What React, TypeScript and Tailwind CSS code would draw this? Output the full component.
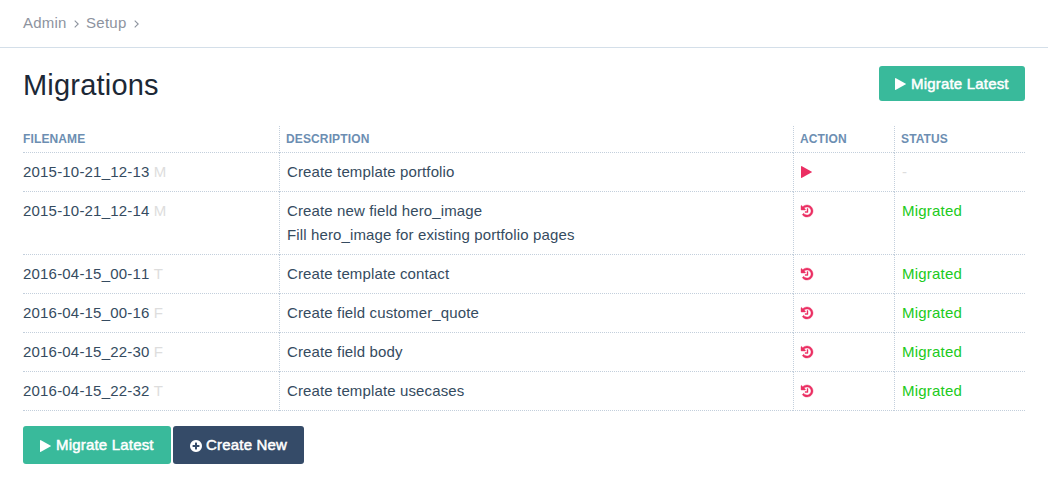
import type { ReactNode } from "react";

function PlayIcon({ className = "" }: { className?: string }) {
  return (
    <svg viewBox="0 0 11 12" className={`h-3 w-[11px] shrink-0 ${className}`} fill="currentColor">
      <path d="M0 .4Q0-.1.5.1L10.8 5.7Q11.2 6 10.8 6.3L.5 11.9Q0 12.1 0 11.6z" />
    </svg>
  );
}

function HistoryIcon() {
  return (
    <svg viewBox="0 128 1536 1536" className="size-3 overflow-visible" fill="currentColor" stroke="currentColor" strokeWidth="50">
      <path d="M1536 896q0 156-61 298t-164 245-245 164-298 61q-172 0-327-72.5t-264-204.5q-7-10-6.5-22.5t8.5-20.5l137-138q10-9 25-9 16 2 23 12 73 95 179 147t225 52q104 0 198.5-40.5t163.5-109.5 109.5-163.5 40.5-198.5-40.5-198.5-109.5-163.5-163.5-109.5-198.5-40.5q-98 0-188 35.5t-160 101.5l137 138q31 30 14 69-17 40-59 40h-448q-26 0-45-19t-19-45v-448q0-42 40-59 39-17 69 14l130 129q107-101 244.5-156.5t284.5-55.5q156 0 298 61t245 164 164 245 61 298zm-640-288v448q0 14-9 23t-23 9h-320q-14 0-23-9t-9-23v-64q0-14 9-23t23-9h224v-352q0-14 9-23t23-9h64q14 0 23 9t9 23z" />
    </svg>
  );
}

function PlusCircleIcon() {
  return (
    <svg viewBox="0 0 1536 1536" className="mt-0.5 size-3 shrink-0" fill="currentColor">
      <path d="M1216 832v-128q0-26-19-45t-45-19h-256v-256q0-26-19-45t-45-19h-128q-26 0-45 19t-19 45v256h-256q-26 0-45 19t-19 45v128q0 26 19 45t45 19h256v256q0 26 19 45t45 19h128q26 0 45-19t19-45v-256h256q26 0 45-19t19-45zm320-64q0 209-103 385.5t-279.5 279.5-385.5 103-385.5-103-279.5-279.5-103-385.5 103-385.5 279.5-279.5 385.5-103 385.5 103 279.5 279.5 103 385.5z" />
    </svg>
  );
}

function Chevron({ className = "" }: { className?: string }) {
  return (
    <svg viewBox="0 0 5 8" className={`mt-px h-2 w-[5px] ${className}`} fill="none" stroke="currentColor" strokeWidth="1.1">
      <path d="M.7.6 4.2 4 .7 7.4" />
    </svg>
  );
}

function Button({ className, children }: { className: string; children: ReactNode }) {
  return (
    <button className={`flex items-center rounded-[3px] text-[15px] leading-6 whitespace-nowrap text-white ${className}`}>
      {children}
    </button>
  );
}

const label = "tracking-[0.19px] [-webkit-text-stroke:0.5px_white]";

const rows = [
  { file: "2015-10-21_12-13", type: "M", description: ["Create template portfolio"], migrated: false },
  { file: "2015-10-21_12-14", type: "M", description: ["Create new field hero_image", "Fill hero_image for existing portfolio pages"], migrated: true },
  { file: "2016-04-15_00-11", type: "T", description: ["Create template contact"], migrated: true },
  { file: "2016-04-15_00-16", type: "F", description: ["Create field customer_quote"], migrated: true },
  { file: "2016-04-15_22-30", type: "F", description: ["Create field body"], migrated: true },
  { file: "2016-04-15_22-32", type: "T", description: ["Create template usecases"], migrated: true },
];

export default function App() {
  return (
    <div className="min-h-[502px] bg-white font-['Liberation_Sans',Arial,sans-serif] text-[15px] text-[#354b60]">
      <nav className="flex h-12 items-center border-b border-[#d4dfe9] pl-[23px] text-[#8d939e]">
        <span className="tracking-[0.2px]">Admin</span>
        <Chevron className="ml-[7.5px]" />
        <span className="ml-[7px] tracking-[0.25px]">Setup</span>
        <Chevron className="ml-[7.5px]" />
      </nav>
      <main className="px-[23px] pt-[18px]">
        <header className="flex h-[60px] items-start justify-between">
          <h1 className="text-[29px] leading-[38px] tracking-[0.2px] text-[#1c2836]">Migrations</h1>
          <Button className="h-[35px] w-[146px] bg-[#39ba9b] pl-4">
            <PlayIcon />
            <span className={`ml-[5px] ${label}`}>Migrate Latest</span>
          </Button>
        </header>
        <table className="w-full table-fixed border-separate border-spacing-0 text-left">
          <colgroup>
            <col className="w-[256px]" />
            <col className="w-[514px]" />
            <col className="w-[101px]" />
            <col className="w-[131px]" />
          </colgroup>
          <thead>
            <tr className="text-xs leading-[26px] tracking-[0.13px] text-[#6c8eb2] [&>th]:h-[27px] [&>th]:border-b [&>th]:border-dotted [&>th]:border-[#c3cfdc] [&>th]:p-0 [&>th+th]:border-l [&>th+th]:pl-1.5">
              <th>FILENAME</th>
              <th>DESCRIPTION</th>
              <th>ACTION</th>
              <th>STATUS</th>
            </tr>
          </thead>
          <tbody>
            {rows.map((row) => (
              <tr
                key={row.file}
                className="align-top leading-6 [&>td]:border-b [&>td]:border-dotted [&>td]:border-[#c3cfdc] [&>td]:pt-[7px] [&>td]:pb-[7px] [&>td+td]:border-l [&>td+td]:pl-[7px]"
              >
                <td className="[font-kerning:none]">
                  <span className="tracking-[0.19px]">{row.file}</span> <span className="text-[#dddddd]">{row.type}</span>
                </td>
                <td>
                  {row.description.map((line) => (
                    <div key={line} className="tracking-[0.13px]">{line}</div>
                  ))}
                </td>
                <td className="text-[#eb2f63]">
                  <div className="-ml-[0.3px] flex h-6 items-center">{row.migrated ? <HistoryIcon /> : <PlayIcon />}</div>
                </td>
                <td className={row.migrated ? "tracking-[0.22px] text-[#20ca20]" : "text-[#dddddd]"}>
                  {row.migrated ? "Migrated" : "-"}
                </td>
              </tr>
            ))}
          </tbody>
        </table>
        <footer className="flex gap-0.5 pt-[15px]">
          <Button className="h-[38px] w-[148px] bg-[#39ba9b] pl-[17px]">
            <PlayIcon className="mt-0.5" />
            <span className={`ml-[5px] ${label}`}>Migrate Latest</span>
          </Button>
          <Button className="h-[38px] w-[131px] bg-[#354b68] pl-[17px]">
            <PlusCircleIcon />
            <span className={`ml-1 ${label}`}>Create New</span>
          </Button>
        </footer>
      </main>
    </div>
  );
}
